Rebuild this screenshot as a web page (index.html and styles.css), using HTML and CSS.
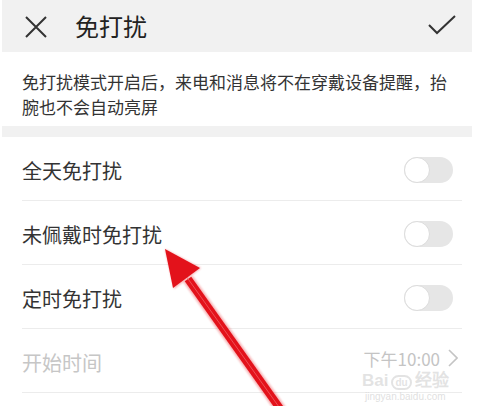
FILE: index.html
```html
<!DOCTYPE html>
<html lang="zh-CN">
<head>
  <meta charset="UTF-8"/>
  <title>免打扰</title>
  <link rel="stylesheet" href="styles.css">
</head>
<body>

<div class="screen">

  <div class="topbar">
    <svg class="icon-close" width="22" height="22" viewBox="0 0 22 22">
      <path d="M1 1 L21 21 M21 1 L1 21" stroke="#333" stroke-width="2" fill="none"/>
    </svg>
    <div class="title">免打扰</div>
    <svg class="icon-ok" width="28" height="20" viewBox="0 0 28 20">
      <path d="M1 10 L9 18 L27 1" stroke="#333" stroke-width="2" fill="none"/>
    </svg>
  </div>

  <div class="desc">免打扰模式开启后，来电和消息将不在穿戴设备提醒，抬腕也不会自动亮屏</div>

  <div class="gap"></div>

  <div class="list">
    <div class="row">
      <span class="label">全天免打扰</span>
      <span class="switch"><span class="knob"></span></span>
    </div>
    <div class="row">
      <span class="label">未佩戴时免打扰</span>
      <span class="switch"><span class="knob"></span></span>
    </div>
    <div class="row">
      <span class="label">定时免打扰</span>
      <span class="switch"><span class="knob"></span></span>
    </div>
    <div class="row disabled">
      <span class="label">开始时间</span>
      <span class="value">下午10:00
        <svg class="chev" width="10" height="18" viewBox="0 0 10 18">
          <path d="M1 1 L9 9 L1 17" stroke="#c4c4c4" stroke-width="1.6" fill="none"/>
        </svg>
      </span>
    </div>
  </div>

  <!-- watermark -->
  <div class="watermark">
    <div class="wm-logo">Bai<span class="wm-paw">du</span>经验</div>
    <div class="wm-url">jingyan.baidu.com</div>
  </div>

  <!-- red arrow -->
  <svg class="arrow" width="477" height="406" viewBox="0 0 477 406">
    <defs>
      <filter id="glow" x="-20%" y="-20%" width="140%" height="140%">
        <feGaussianBlur stdDeviation="1"/>
      </filter>
    </defs>
    <g filter="url(#glow)" opacity="0.35">
      <path d="M188 279 L281 410" stroke="#e8141c" stroke-width="11" fill="none"/>
      <polygon points="165,249 201,268 174,289" fill="#e8141c"/>
    </g>
    <path d="M188 279 L281 410" stroke="#e3121b" stroke-width="8" fill="none"/>
    <path d="M186 276 L279 407" stroke="#f26a6e" stroke-width="1" fill="none" opacity="0.7"/>
    <polygon points="165,249 200,268 173,288" fill="#e3121b"/>
  </svg>

</div>

</body>
</html>
```

FILE: styles.css
```css
* {
  box-sizing: border-box;
}

body {
  margin: 0;
  background: #fff;
  font-family: "Noto Sans CJK SC", "Noto Sans", sans-serif;
  color: #333;
}

.screen {
  position: relative;
  width: 477px;
  height: 406px;
  overflow: hidden;
  padding: 0 5px 0 2px;
}

.topbar {
  display: flex;
  align-items: center;
  height: 52px;
  background: #f1f1f1;
  padding: 0 16px 0 23px;
}

.icon-close {
  margin-top: 2px;
}

.title {
  margin-left: 28px;
  font-size: 24px;
  line-height: 1;
  color: #222;
}

.icon-ok {
  margin-left: auto;
  margin-top: -2px;
}

.desc {
  height: 74px;
  padding: 17px 20px 0 20px;
  font-size: 17px;
  line-height: 25px;
  color: #333;
}

.gap {
  height: 11px;
  background: #f1f1f1;
}

.list {
  margin: 0 10px 0 20px;
}

.row {
  display: flex;
  align-items: center;
  height: 64px;
  padding-top: 3px;
  border-bottom: 1px solid #ececec;
}

.label {
  font-size: 20px;
  color: #333;
}

.switch {
  position: relative;
  margin-left: auto;
  margin-right: 9px;
  width: 49px;
  height: 26px;
  border-radius: 13px;
  background: #e6e6e6;
}

.knob {
  position: absolute;
  left: 0;
  top: 0;
  width: 26px;
  height: 26px;
  border-radius: 50%;
  background: #fff;
  border: 1px solid #dcdcdc;
}

.disabled .label {
  color: #c6c6c6;
}

.value {
  display: flex;
  align-items: center;
  gap: 8px;
  margin-left: auto;
  margin-right: 4px;
  margin-top: -8px;
  font-size: 17px;
  color: #c4c4c4;
}

.watermark {
  position: absolute;
  left: 362px;
  top: 372px;
  text-align: center;
}

.wm-logo {
  font-family: "Liberation Sans", sans-serif;
  font-size: 17px;
  font-weight: bold;
  line-height: 18px;
  color: rgba(215, 215, 215, 0.7);
}

.wm-paw {
  display: inline-block;
  font-size: 10px;
  margin: 0 3px;
  padding: 0 2px;
  border: 2px solid rgba(215, 215, 215, 0.7);
  border-radius: 8px;
  line-height: 11px;
}

.wm-url {
  font-family: "Liberation Sans", sans-serif;
  font-size: 10px;
  line-height: 12px;
  color: rgba(210, 210, 210, 0.7);
  margin-top: 1px;
}

.arrow {
  position: absolute;
  left: 0;
  top: 0;
}
```
